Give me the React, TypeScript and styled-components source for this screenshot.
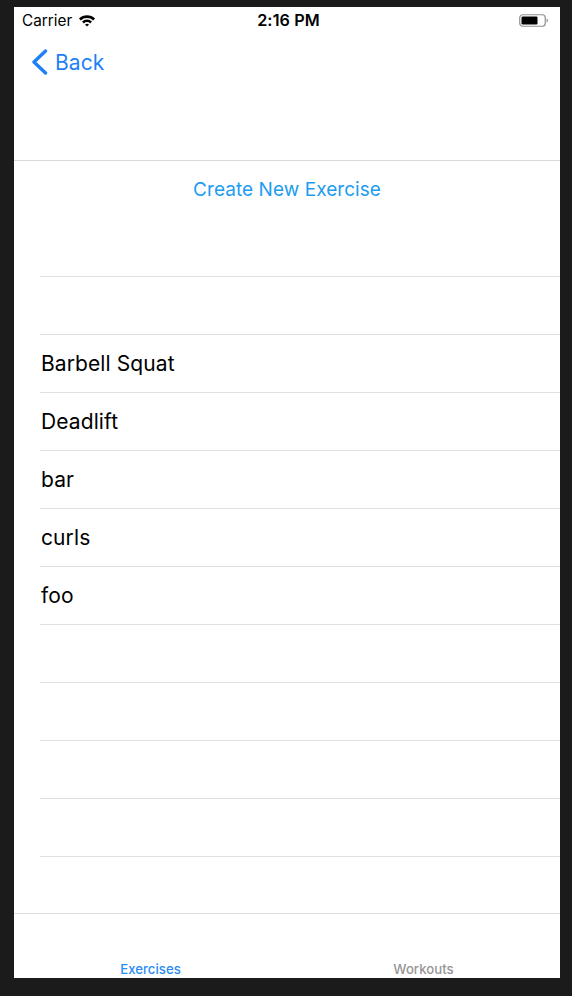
import React from "react";
import styled, { createGlobalStyle } from "styled-components";

const Global = createGlobalStyle`
  html, body { margin: 0; padding: 0; background: #1b1b1b; }
  body { font-family: Inter, "Noto Sans", "Liberation Sans", sans-serif; -webkit-font-smoothing: antialiased; }
  * { box-sizing: border-box; }
`;

const Frame = styled.div`
  padding: 7px 12px 18px 14px;
  background: #1b1b1b;
  width: 572px;
  height: 996px;
`;

const Screen = styled.div`
  width: 546px;
  height: 971px;
  background: #ffffff;
  display: flex;
  flex-direction: column;
  overflow: hidden;
`;

const StatusBar = styled.div`
  height: 26px;
  display: grid;
  grid-template-columns: 1fr auto 1fr;
  align-items: center;
  padding: 0 11px 0 8px;
  font-size: 15.3px;
  color: #000;
`;

const StatusLeft = styled.div`
  display: flex;
  align-items: center;
  gap: 6px;
`;

const StatusTime = styled.div`
  font-weight: 600;
  font-size: 16.2px;
  letter-spacing: 0.1px;
  margin-left: 6px;
`;

const StatusRight = styled.div`
  display: flex;
  justify-content: flex-end;
  align-items: center;
`;

const NavBar = styled.div`
  height: 128px;
  border-bottom: 1px solid #dadada;
  flex-shrink: 0;
`;

const NavRow = styled.div`
  height: 58px;
  display: flex;
  align-items: center;
  padding-left: 17px;
  gap: 7px;
  color: #1f80f5;
`;

const BackLabel = styled.span`
  font-size: 21px;
  font-weight: 400;
  letter-spacing: 0.1px;
`;

const Table = styled.div`
  flex: 1;
  overflow: hidden;
  display: flex;
  flex-direction: column;
`;

const Header = styled.div`
  height: 115px;
  flex-shrink: 0;
`;

const CreateButton = styled.div`
  height: 57px;
  display: flex;
  align-items: center;
  justify-content: center;
  font-size: 19px;
  color: #1d9cf1;
  letter-spacing: 0.05px;
`;

const Row = styled.div`
  height: 58px;
  flex-shrink: 0;
  margin-left: 26px;
  border-top: 1px solid #e0e0e0;
  display: flex;
  align-items: center;
  padding-left: 1px;
  font-size: 21px;
  letter-spacing: 0.1px;
  color: #000;
`;

const TabBar = styled.div`
  height: 65px;
  flex-shrink: 0;
  border-top: 1px solid #dedede;
  display: grid;
  grid-template-columns: 1fr 1fr;
`;

const Tab = styled.div<{ $active?: boolean }>`
  display: flex;
  align-items: flex-end;
  justify-content: center;
  padding-bottom: 1px;
  font-size: 13.2px;
  font-weight: 500;
  color: ${(p) => (p.$active ? "#2a8df5" : "#959595")};
`;

const Wifi = () => (
  <svg width="18" height="13" viewBox="0 0 18 13">
    <path d="M1 4.6 A11.5 11.5 0 0 1 17 4.6 L15.2 6.4 A9 9 0 0 0 2.8 6.4 Z" fill="#000" />
    <path d="M4 7.6 A7.2 7.2 0 0 1 14 7.6 L12.2 9.4 A4.6 4.6 0 0 0 5.8 9.4 Z" fill="#000" />
    <path d="M7 10.6 A2.9 2.9 0 0 1 11 10.6 L9 12.6 Z" fill="#000" />
  </svg>
);

const Battery = () => (
  <svg width="30" height="13" viewBox="0 0 30 13">
    <rect x="0.75" y="0.75" width="25.5" height="11.5" rx="3" fill="none" stroke="#8e8e8e" strokeWidth="1.2" />
    <rect x="2.5" y="2.5" width="16" height="8" rx="1.2" fill="#000" />
    <path d="M27.6 4.5 Q29 5 29 6.5 Q29 8 27.6 8.5 Z" fill="#8e8e8e" />
  </svg>
);

const Chevron = () => (
  <svg width="17" height="26" viewBox="0 0 17 26">
    <path d="M14.5 2 L3 13 L14.5 24" fill="none" stroke="#1f80f5" strokeWidth="3.4" strokeLinecap="round" strokeLinejoin="round" />
  </svg>
);

const items = ["", "Barbell Squat", "Deadlift", "bar", "curls", "foo", "", "", "", "", ""];

export default function App() {
  return (
    <Frame>
      <Global />
      <Screen>
        <StatusBar>
          <StatusLeft>
            <span>Carrier</span>
            <Wifi />
          </StatusLeft>
          <StatusTime>2:16 PM</StatusTime>
          <StatusRight>
            <Battery />
          </StatusRight>
        </StatusBar>
        <NavBar>
          <NavRow>
            <Chevron />
            <BackLabel>Back</BackLabel>
          </NavRow>
        </NavBar>
        <Table>
          <Header>
            <CreateButton>Create New Exercise</CreateButton>
          </Header>
          {items.map((t, i) => (
            <Row key={i}>{t}</Row>
          ))}
        </Table>
        <TabBar>
          <Tab $active>Exercises</Tab>
          <Tab>Workouts</Tab>
        </TabBar>
      </Screen>
    </Frame>
  );
}
